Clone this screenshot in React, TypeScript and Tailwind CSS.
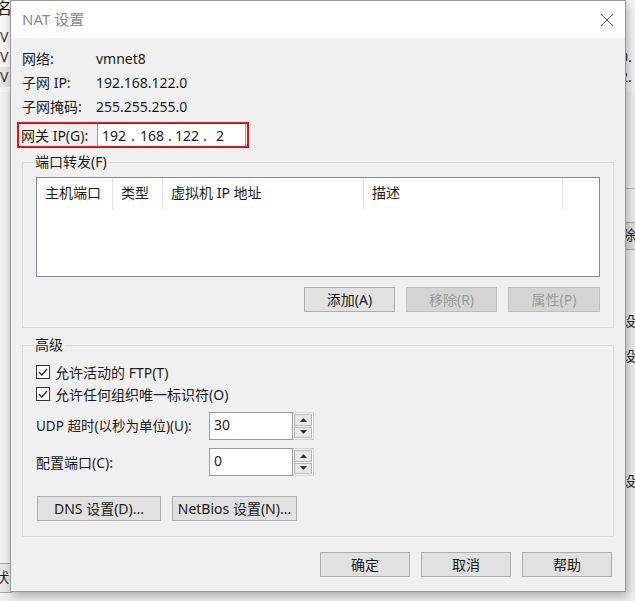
import clsx from "clsx";

type BtnProps = { children: React.ReactNode; disabled?: boolean; className?: string };

const WinButton = ({ children, disabled, className }: BtnProps) => (
	<button
		disabled={disabled}
		className={clsx(
			"flex h-[25px] items-center justify-center border text-[14px] leading-none",
			disabled
				? "border-[#bfbfbf] bg-[#d4d4d4] text-[#9b9b9b]"
				: "border-[#adadad] bg-[#e1e1e1] text-[#1a1a1a]",
			className,
		)}
	>
		{children}
	</button>
);

const CheckBox = ({ label }: { label: string }) => (
	<label className="flex h-[22px] items-center">
		<span className="flex h-[14px] w-[14px] items-center justify-center border border-[#333] bg-white">
			<svg viewBox="0 0 12 12" className="h-[12px] w-[12px]">
				<path d="M2 6.2 L4.8 9 L10 3" fill="none" stroke="#222" strokeWidth="1.2" />
			</svg>
		</span>
		<span className="ml-[5px]">{label}</span>
	</label>
);

const SpinInput = ({ value }: { value: string }) => (
	<div className="flex h-[28px]">
		<div className="flex w-[84px] items-center border border-[#9a9a9a] bg-white pb-[3px] pl-[4px] text-[14px]">
			{value}
		</div>
		<div className="flex w-[21px] flex-col gap-[1px] border border-l-0 border-[#cfcfcf] bg-white p-[1px]">
			<span className="flex flex-1 items-center justify-center border border-[#b5b5b5] bg-[#e8e8e8]">
				<svg viewBox="0 0 7 4" className="h-[4px] w-[7px]">
					<path d="M0 4 L3.5 0 L7 4 Z" fill="#333" />
				</svg>
			</span>
			<span className="flex flex-1 items-center justify-center border border-[#b5b5b5] bg-[#e8e8e8]">
				<svg viewBox="0 0 7 4" className="h-[4px] w-[7px]">
					<path d="M0 0 L3.5 4 L7 0 Z" fill="#333" />
				</svg>
			</span>
		</div>
	</div>
);

const infoRows = [
	{ label: "网络:", value: "vmnet8" },
	{ label: "子网 IP:", value: "192.168.122.0" },
	{ label: "子网掩码:", value: "255.255.255.0" },
];

const columns = [
	{ name: "主机端口", w: "w-[76px]" },
	{ name: "类型", w: "w-[50px]" },
	{ name: "虚拟机 IP 地址", w: "w-[201px]" },
	{ name: "描述", w: "w-[199px]" },
];

const App = () => {
	return (
		<div className="relative h-[601px] w-[635px] overflow-hidden bg-[#f0f0f0] font-['Noto_Sans','Noto_Sans_CJK_SC',sans-serif] text-[14px] text-[#1a1a1a]">
			{/* window behind the dialog */}
			<div className="absolute left-0 top-0 h-[92px] w-full bg-[#f7f7f7]" />
			<span className="absolute -left-[4px] -top-[4px] text-[16px]">名</span>
			<span className="absolute left-0 top-[26px] text-[14px] text-[#333]">V</span>
			<span className="absolute left-0 top-[46px] text-[14px] text-[#333]">V</span>
			<div className="absolute left-0 top-[67px] h-[20px] w-[12px] bg-[#e5e5e5]" />
			<span className="absolute left-0 top-[66px] text-[14px] text-[#333]">V</span>
			<span className="absolute left-[620px] top-[46px] text-[14px]">0.</span>
			<span className="absolute left-[620px] top-[66px] text-[14px]">2.</span>
			<div className="absolute left-[626px] top-[188px] h-[1px] w-[10px] bg-[#bbb]" />
			<div className="absolute left-[626px] top-[222px] h-[28px] w-[10px] border-y border-[#aaa] bg-[#e1e1e1]" />
			<span className="absolute left-[622px] top-[224px] text-[14px]">除</span>
			<span className="absolute left-[622px] top-[310px] text-[14px]">设</span>
			<span className="absolute left-[622px] top-[345px] text-[14px]">设</span>
			<span className="absolute left-[622px] top-[470px] text-[14px]">设</span>
			<div className="absolute left-0 top-[563px] h-[30px] w-[12px] border-y border-[#aaa] bg-[#e8e8e8]" />
			<span className="absolute -left-[5px] top-[566px] text-[14px]">状</span>

			{/* NAT dialog */}
			<div className="absolute left-[10px] top-0 flex h-[592px] w-[616px] flex-col border border-[#9a9a9a] bg-[#f0f0f0] shadow-[2px_4px_10px_rgba(0,0,0,0.3)]">
				<div className="flex h-[37px] items-center justify-between bg-white pl-[11px] pr-[11px]">
					<span className="text-[15px] text-[#8c8c8c]">NAT 设置</span>
					<svg viewBox="0 0 14 14" className="h-[14px] w-[14px]">
						<path d="M1 1 L13 13 M13 1 L1 13" stroke="#555" strokeWidth="1" />
					</svg>
				</div>

				<div className="flex flex-col px-[11px] pt-[8px]">
					{infoRows.map((row) => (
						<div key={row.label} className="flex h-[24px] items-center">
							<span className="w-[74px]">{row.label}</span>
							<span>{row.value}</span>
						</div>
					))}

					<div className="-ml-[5px] mt-[4px] flex h-[26px] w-[232px] items-stretch border-2 border-[#d4151c] pl-[2px]">
						<span className="flex w-[76px] items-center">网关 IP(G):</span>
						<div className="flex w-[149px] items-center border-x border-[#9a9a9a] bg-white">
							<span className="w-[32px] text-center">192</span>
							<span className="w-[6px] text-center">.</span>
							<span className="w-[32px] text-center">168</span>
							<span className="w-[4px] text-center">.</span>
							<span className="w-[30px] text-center">122</span>
							<span className="w-[6px] text-center">.</span>
							<span className="w-[24px] text-center">2</span>
						</div>
					</div>

					<fieldset className="mt-[5px] border border-[#dcdcdc] px-[13px] pb-[15px]">
						<legend className="-ml-[3px] px-[2px] leading-[18px]">端口转发(F)</legend>
						<div className="mt-[6px] h-[100px] border border-[#828790] bg-white">
							<div className="flex h-[31px]">
								{columns.map((col) => (
									<div key={col.name} className={clsx("flex items-center border-r border-[#e5e5e5] pb-[2px] pl-[8px]", col.w)}>
										{col.name}
									</div>
								))}
							</div>
						</div>
						<div className="mt-[10px] flex justify-end gap-[11px]">
							<WinButton className="w-[91px]">添加(A)</WinButton>
							<WinButton disabled className="w-[91px]">移除(R)</WinButton>
							<WinButton disabled className="w-[92px]">属性(P)</WinButton>
						</div>
					</fieldset>

					<fieldset className="mt-[8px] border border-[#dcdcdc] px-[13px] pb-[15px]">
						<legend className="-ml-[3px] px-[2px] leading-[18px]">高级</legend>
						<div className="pt-[7px]">
							<CheckBox label="允许活动的 FTP(T)" />
							<CheckBox label="允许任何组织唯一标识符(O)" />
						</div>
						<div className="mt-[7px] flex items-center">
							<span className="w-[173px] text-[13.5px]">UDP 超时(以秒为单位)(U):</span>
							<SpinInput value="30" />
						</div>
						<div className="mt-[8px] flex items-center">
							<span className="w-[173px]">配置端口(C):</span>
							<SpinInput value="0" />
						</div>
						<div className="mt-[20px] flex gap-[11px] pl-[1px]">
							<WinButton className="w-[124px]">DNS 设置(D)...</WinButton>
							<WinButton className="w-[125px]">NetBios 设置(N)...</WinButton>
						</div>
					</fieldset>

					<div className="mt-[15px] flex justify-end gap-[11px] pr-[2px]">
						<WinButton className="h-[24px] w-[90px]">确定</WinButton>
						<WinButton className="h-[24px] w-[90px]">取消</WinButton>
						<WinButton className="h-[24px] w-[90px]">帮助</WinButton>
					</div>
				</div>
			</div>
		</div>
	);
};

export default App;
